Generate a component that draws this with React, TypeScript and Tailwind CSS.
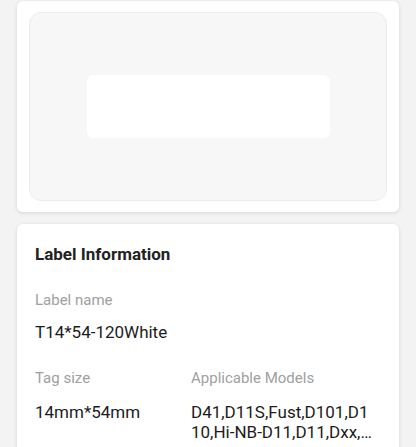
export default function App() {
  return (
    <div
      className="h-[447px] w-[416px] overflow-hidden bg-[#f3f3f3] px-[17px] pt-px"
      style={{ fontFamily: 'Roboto, "Noto Sans", sans-serif' }}
    >
      {/* Preview card */}
      <div className="rounded-[6px] bg-white px-3 py-[11px] shadow-[0_1px_4px_rgba(0,0,0,0.12)]">
        <div className="flex h-[189px] items-center justify-center rounded-[12px] border border-[#ececec] bg-[#f7f7f7]">
          <div className="h-[63px] w-[243px] rounded-[6px] bg-white" />
        </div>
      </div>

      {/* Label info card */}
      <div className="mt-3 rounded-[6px] bg-white px-[18px] pt-[18px] pb-4 shadow-[0_1px_4px_rgba(0,0,0,0.12)]">
        <h2 className="text-[17px] leading-6 font-bold text-[#222]">Label Information</h2>

        <div className="mt-6 text-[15px] leading-5 text-[#a0a0a0]">Label name</div>
        <div className="mt-3 text-[17px] leading-5 text-[#1c1c1c]">T14*54-120White</div>

        <div className="mt-[26px] flex">
          <div className="w-[156px] shrink-0">
            <div className="text-[15px] leading-5 text-[#a0a0a0]">Tag size</div>
            <div className="mt-[14px] text-[17px] leading-5 text-[#1c1c1c]">14mm*54mm</div>
          </div>
          <div className="w-[186px]">
            <div className="text-[15px] leading-5 text-[#a0a0a0]">Applicable Models</div>
            <div className="mt-[14px] line-clamp-2 break-all text-[17px] leading-5 text-[#1c1c1c]">
              D41,D11S,Fust,D101,D110,Hi-NB-D11,D11,Dxx,D11_H,D101_H
            </div>
          </div>
        </div>
      </div>
    </div>
  );
}
